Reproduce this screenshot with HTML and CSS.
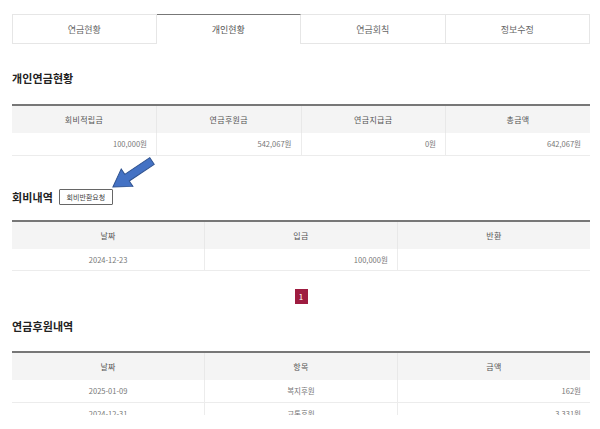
FILE: index.html
```html
<!DOCTYPE html>
<html lang="ko">
<head>
<meta charset="utf-8">
<link rel="stylesheet" href="styles.css">
</head>
<body>
<div class="page">
  <nav class="tabs">
    <div class="tab">연금현황</div>
    <div class="tab active">개인현황</div>
    <div class="tab">연금회칙</div>
    <div class="tab">정보수정</div>
  </nav>

  <h2 class="title t1">개인연금현황</h2>
  <table class="grid">
    <thead>
      <tr><th>회비적립금</th><th>연금후원금</th><th>연금지급금</th><th>총금액</th></tr>
    </thead>
    <tbody>
      <tr><td class="r">100,000원</td><td class="r">542,067원</td><td class="r">0원</td><td class="r">642,067원</td></tr>
    </tbody>
  </table>

  <div class="title-row t2">
    <h2 class="title">회비내역</h2>
    <button class="btn">회비반환요청</button>
  </div>
  <table class="grid">
    <thead>
      <tr><th>날짜</th><th>입금</th><th>반환</th></tr>
    </thead>
    <tbody>
      <tr><td class="c">2024-12-23</td><td class="r">100,000원</td><td class="r"></td></tr>
    </tbody>
  </table>

  <div class="pager"><span class="pg on">1</span></div>

  <h2 class="title t3">연금후원내역</h2>
  <table class="grid">
    <thead>
      <tr><th>날짜</th><th>항목</th><th>금액</th></tr>
    </thead>
    <tbody>
      <tr><td class="c">2025-01-09</td><td class="c">복지후원</td><td class="r">162원</td></tr>
      <tr><td class="c">2024-12-31</td><td class="c">교통후원</td><td class="r">3,331원</td></tr>
    </tbody>
  </table>

  <svg class="arrow" width="600" height="429" viewBox="0 0 600 429" aria-hidden="true">
    <polygon transform="translate(152 161) rotate(146.3)" points="0,-4 30,-4 30,-10.5 47,0 30,10.5 30,4 0,4" fill="#4472c4" stroke="#2f528f" stroke-width="1" stroke-linejoin="miter"/>
  </svg>
</div>
</body>
</html>
```
FILE: styles.css
```css
* { box-sizing: border-box; }
html, body { margin: 0; padding: 0; background: #fff; }
body {
  font-family: "Noto Sans CJK KR", "Noto Sans", sans-serif;
  color: #555;
}
.page {
  position: relative;
  width: 600px;
  height: 415px;
  overflow: hidden;
  padding: 14px 10px 0 12px;
}
.tabs {
  display: grid;
  grid-template-columns: repeat(4, 1fr);
  height: 30px;
}
.tab {
  display: flex;
  align-items: center;
  justify-content: center;
  font-size: 9px;
  color: #666;
  border: 1px solid #e6e6e6;
  border-left: none;
  background: #fff;
}
.tab:first-child { border-left: 1px solid #e6e6e6; }
.tab.active {
  border-top: 1px solid #777;
  border-bottom: none;
  color: #555;
}
.title {
  margin: 0;
  font-size: 11px;
  line-height: 16px;
  height: 16px;
  font-weight: 700;
  color: #222;
  letter-spacing: 0.1px;
}
.t1 { margin-top: 26px; margin-bottom: 18px; }
.title-row {
  display: flex;
  align-items: center;
  gap: 6px;
  height: 16px;
  margin-top: 33px;
  margin-bottom: 15px;
}
.btn {
  font-family: inherit;
  font-size: 7px;
  color: #444;
  background: #fff;
  border: 1px solid #666;
  border-radius: 1px;
  height: 16px;
  width: 54px;
  padding: 0;
  line-height: 14px;
}
.grid {
  width: 100%;
  border-collapse: collapse;
  table-layout: fixed;
  border-top: 2px solid #777;
}
.grid th {
  height: 28px;
  background: #f4f4f4;
  font-size: 8px;
  font-weight: 400;
  color: #555;
  border-left: 1px solid #e8e8e8;
  padding: 0;
  letter-spacing: 0.3px;
}
.grid td {
  height: 22px;
  font-size: 7.5px;
  color: #777;
  border-left: 1px solid #ececec;
  border-bottom: 1px solid #ececec;
  padding: 0 9px;
}
.grid th:first-child, .grid td:first-child { border-left: none; }
.grid td.r { text-align: right; }
.grid td.c { text-align: center; }
.pager {
  display: flex;
  justify-content: center;
  margin-top: 18px;
  height: 15px;
}
.pg {
  display: flex;
  align-items: center;
  justify-content: center;
  width: 13px;
  height: 15px;
  font-size: 8px;
  color: #fff;
  background: #9e1c40;
}
.t3 { margin-top: 14px; margin-bottom: 17px; }
.arrow {
  position: absolute;
  left: 0;
  top: 0;
  pointer-events: none;
}
```
